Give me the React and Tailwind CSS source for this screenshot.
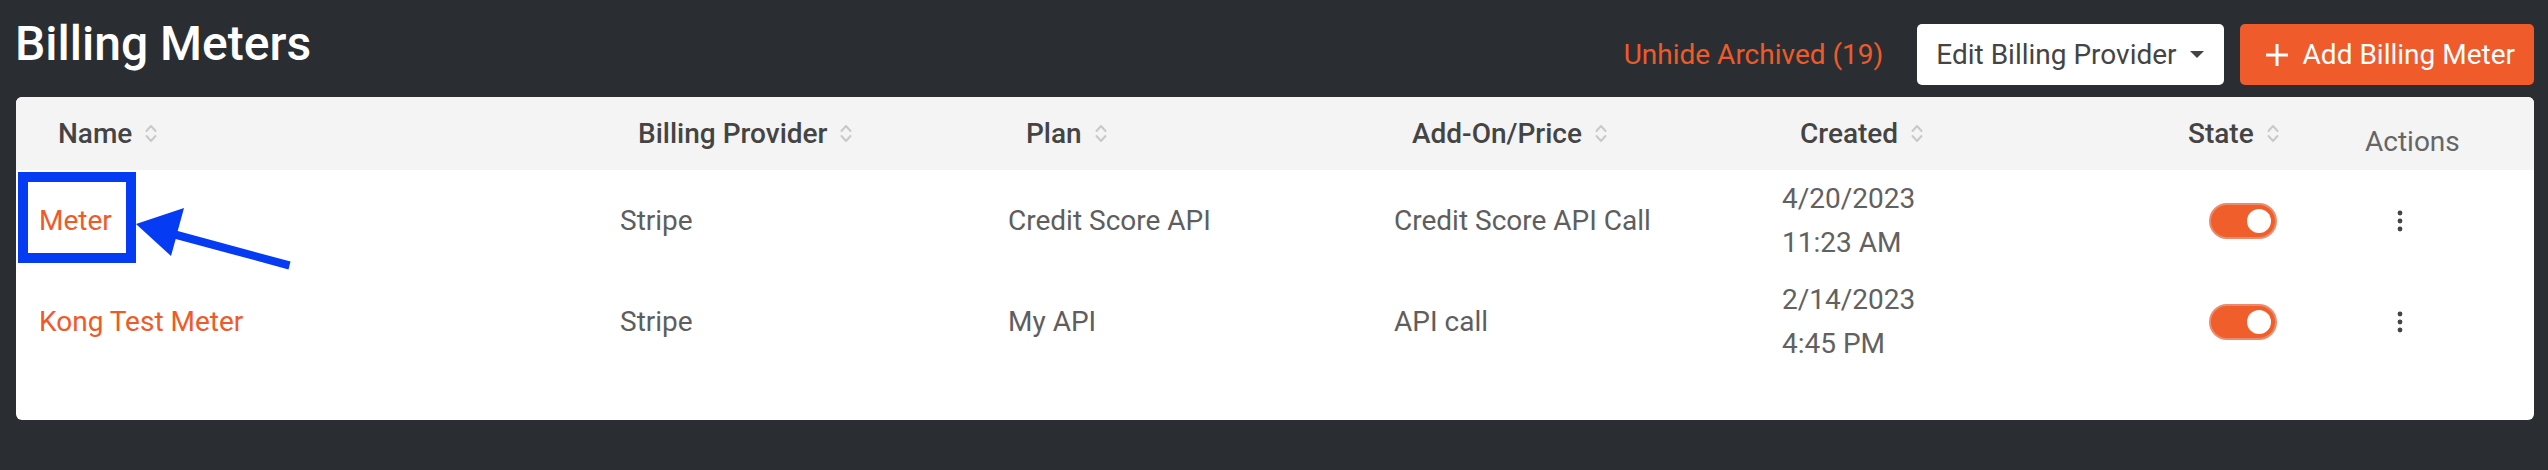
const COLUMNS = [
  { key: 'name', label: 'Name' },
  { key: 'provider', label: 'Billing Provider' },
  { key: 'plan', label: 'Plan' },
  { key: 'addon', label: 'Add-On/Price' },
  { key: 'created', label: 'Created' },
  { key: 'state', label: 'State' },
]

const METERS = [
  { id: 1, name: 'Meter', provider: 'Stripe', plan: 'Credit Score API', addon: 'Credit Score API Call', date: '4/20/2023', time: '11:23 AM', on: true },
  { id: 2, name: 'Kong Test Meter', provider: 'Stripe', plan: 'My API', addon: 'API call', date: '2/14/2023', time: '4:45 PM', on: true },
]

function SortIcon() {
  return (
    <svg width="12" height="21" viewBox="0 0 12 21" fill="none" stroke="#c9c9c9" strokeWidth="2" strokeLinecap="round" strokeLinejoin="round">
      <polyline points="1.5,8 6,3 10.5,8" />
      <polyline points="1.5,13 6,18 10.5,13" />
    </svg>
  )
}

function Kebab() {
  return (
    <svg width="6" height="22" viewBox="0 0 6 22" fill="#444">
      <circle cx="3" cy="3" r="2.4" />
      <circle cx="3" cy="11" r="2.4" />
      <circle cx="3" cy="19" r="2.4" />
    </svg>
  )
}

function Toggle({ on }) {
  return (
    <div className={`w-[68px] h-[36px] rounded-full border-2 flex items-center pr-[4px] pl-[4px] ${on ? 'bg-[#f05e2c] border-[#eb8b6b] justify-end' : 'bg-gray-300 border-gray-300 justify-start'}`}>
      <div className="w-[24px] h-[24px] rounded-full bg-white" />
    </div>
  )
}

export default function App() {
  return (
    <div className="relative min-h-[470px] bg-[#2a2e33] pl-[16px] pr-[14px] font-['Roboto',sans-serif]">
      {/* Top bar */}
      <div className="flex justify-between items-start h-[97px]">
        <h1 className="mt-[16px] -ml-[1px] text-[48px] leading-[56px] font-medium text-white">Billing Meters</h1>
        <div className="mt-[24px] h-[61px] flex items-center">
          <span className="mr-[34px] text-[28px] text-[#f05a28] cursor-pointer">Unhide Archived (19)</span>
          <button className="h-[61px] bg-white rounded-[5px] pl-[19px] pr-[20px] flex items-center gap-[13px] text-[28px] text-[#444]">
            <span>Edit Billing Provider</span>
            <svg width="14" height="7" viewBox="0 0 14 7" fill="#444">
              <polygon points="0,0 14,0 7,7" />
            </svg>
          </button>
          <button className="ml-[16px] h-[61px] bg-[#ef5b2b] rounded-[5px] pl-[25px] pr-[19px] flex items-center gap-[14px] text-[28px] text-white">
            <svg width="24" height="24" viewBox="0 0 24 24" fill="none" stroke="white" strokeWidth="3">
              <line x1="12" y1="1" x2="12" y2="23" />
              <line x1="1" y1="12" x2="23" y2="12" />
            </svg>
            <span>Add Billing Meter</span>
          </button>
        </div>
      </div>

      {/* Table card */}
      <div className="bg-white rounded-[6px] overflow-hidden pb-[48px]">
        <div className="grid grid-cols-[580px_388px_386px_388px_388px_184px_1fr] h-[73px] bg-[#f4f4f4]">
          {COLUMNS.map(col => (
            <div key={col.key} className="flex items-center gap-[13px] pl-[42px] text-[28px] font-medium text-[#444]">
              <span>{col.label}</span>
              <SortIcon />
            </div>
          ))}
          <div className="flex items-center pt-[16px] pl-[35px] text-[28px] text-[#666]">Actions</div>
        </div>

        {METERS.map(m => (
          <div key={m.id} className="grid grid-cols-[580px_388px_386px_388px_388px_184px_1fr] h-[101px] text-[28px] text-[#5e5e5e]">
            <div className="flex items-center pl-[23px] text-[#f05a28]">{m.name}</div>
            <div className="flex items-center pl-[24px]">{m.provider}</div>
            <div className="flex items-center pl-[24px]">{m.plan}</div>
            <div className="flex items-center pl-[24px]">{m.addon}</div>
            <div className="flex flex-col justify-center pl-[24px] leading-[44px] text-[#616161]">
              <span>{m.date}</span>
              <span>{m.time}</span>
            </div>
            <div className="flex items-center pl-[63px]">
              <Toggle on={m.on} />
            </div>
            <div className="flex items-center pl-[67px]">
              <Kebab />
            </div>
          </div>
        ))}
      </div>

      {/* Annotation: highlight box + arrow */}
      <div className="absolute left-[18px] top-[172px] w-[118px] h-[91px] border-[10px] border-[#053cf3]" />
      <svg className="absolute left-0 top-0" width="300" height="280" viewBox="0 0 300 280">
        <polygon
          fill="#053cf3"
          points="136,224 184,208 177.7,231.1 290.5,261.6 288.5,269.4 175.7,238.9 171,256"
        />
      </svg>
    </div>
  )
}
